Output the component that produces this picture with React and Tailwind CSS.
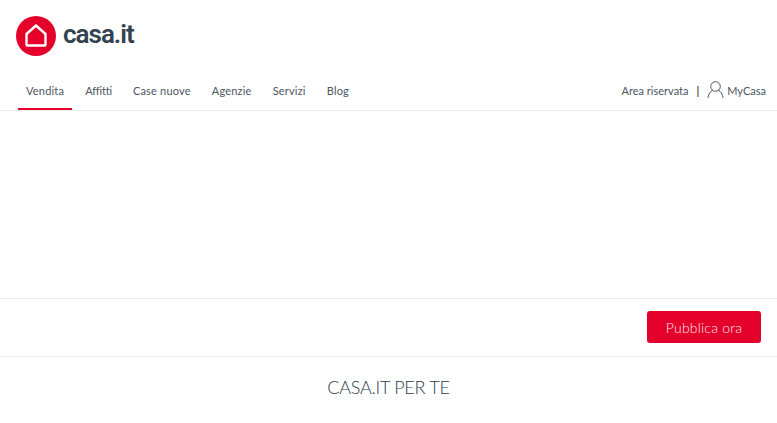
const NAV_ITEMS = ['Vendita', 'Affitti', 'Case nuove', 'Agenzie', 'Servizi', 'Blog'];

function Logo() {
  return (
    <svg className="w-10 h-10" viewBox="0 0 40 40">
      <circle cx="20" cy="20" r="20" fill="#e4002b" />
      <path d="M10.5 18L20 9.5l9.5 8.5v10.5a1 1 0 01-1 1h-17a1 1 0 01-1-1z" fill="none" stroke="#fff" strokeWidth="2.4" strokeLinejoin="round" />
    </svg>
  );
}

function UserIcon() {
  return (
    <svg className="w-[17px] h-[17px]" viewBox="0 0 17 17" fill="none" stroke="#4a5661" strokeWidth="1">
      <circle cx="8.5" cy="5.5" r="4.8" />
      <path d="M1 16.5c.6-3.6 2.2-6 4.4-7.2M16 16.5c-.6-3.6-2.2-6-4.4-7.2" strokeLinecap="round" />
    </svg>
  );
}

export default function App() {
  return (
    <div className="w-[777px] h-[423px] overflow-hidden bg-white font-['Lato',sans-serif] text-[#4a5661]">
      {/* Header */}
      <header className="h-[111px] border-b border-[#ececec]">
        <div className="h-[72px] pl-4 pt-4 flex items-start gap-[7px]">
          <Logo />
          <span className="font-['Roboto',sans-serif] text-[26px] leading-9 font-semibold tracking-[-1px] text-[#33424f]">casa.it</span>
        </div>
        <nav className="h-[38px] flex items-stretch justify-between pl-[18px] pr-[11px]">
          <ul className="flex gap-[5px]">
            {NAV_ITEMS.map((item, i) => (
              <li
                key={item}
                className={`px-2 pt-[11px] text-[11px] leading-4 ${i === 1 ? 'tracking-[-0.2px]' : 'tracking-[0.2px]'} ${i === 0 ? 'border-b-2 border-[#e4002b]' : ''}`}
              >
                {item}
              </li>
            ))}
          </ul>
          <div className="flex items-start pt-[11px] text-[11px] leading-4">
            <span>Area riservata</span>
            <span className="ml-2 text-black">|</span>
            <span className="ml-2 -mt-[2px]"><UserIcon /></span>
            <span className="ml-[3px]">MyCasa</span>
          </div>
        </nav>
      </header>

      {/* Empty banner */}
      <div className="h-[187px]" />

      {/* Publish bar */}
      <div className="h-[59px] border-y border-[#ececec] flex items-center justify-end pr-[16px] pb-[1px]">
        <button className="w-[114px] h-[32px] rounded-[3px] bg-[#e4002b] text-[#fde4e9] text-[14px] font-light tracking-[0.2px]">Pubblica ora</button>
      </div>

      <h2 className="mt-[18px] text-center font-['Lato',sans-serif] text-[18px] leading-6 font-light tracking-[-0.25px] text-[#2f3c48]">CASA.IT PER TE</h2>
    </div>
  );
}
